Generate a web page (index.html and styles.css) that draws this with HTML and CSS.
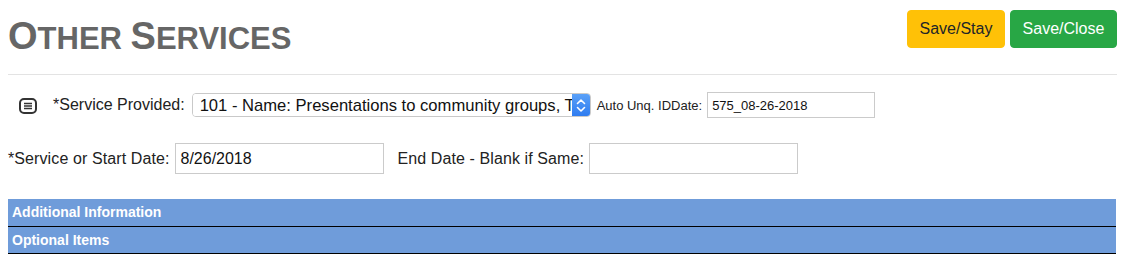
FILE: index.html
```html
<!DOCTYPE html>
<html>
<head>
    <title>Other Services</title>
    <link rel="stylesheet" href="styles.css">
</head>
<body>
    <div class="page">
        <div class="header">
            <h1 class="title"><span class="cap">O</span>THER <span class="cap">S</span>ERVICES</h1>
            <div class="actions">
                <button class="btn btn-stay">Save/Stay</button>
                <button class="btn btn-close">Save/Close</button>
            </div>
        </div>

        <div class="row row-service">
            <svg class="notes-icon" width="18" height="16" viewBox="0 0 18 16">
                <rect x="1" y="1" width="16" height="14" rx="4" fill="none" stroke="#333" stroke-width="2"/>
                <path d="M5 5.5h8M5 8h8M5 10.5h8" stroke="#333" stroke-width="1.5"/>
            </svg>
            <label class="label">*Service Provided:</label>
            <div class="select-box">
                <select class="select">
                    <option>101 - Name: Presentations to community groups, Training, Outreach</option>
                </select>
                <span class="select-arrows">
                    <svg width="18" height="23" viewBox="0 0 18 23">
                        <path d="M5.5 9.5L9 6l3.5 3.5M5.5 13.5L9 17l3.5-3.5" fill="none" stroke="#fff" stroke-width="1.6" stroke-linecap="round" stroke-linejoin="round"/>
                    </svg>
                </span>
            </div>
            <label class="label small">Auto Unq. IDDate:</label>
            <input class="field field-id" type="text" value="575_08-26-2018">
        </div>

        <div class="row row-dates">
            <label class="label">*Service or Start Date:</label>
            <input class="field field-date" type="text" value="8/26/2018">
            <label class="label label-end">End Date - Blank if Same:</label>
            <input class="field field-date" type="text" value="">
        </div>

        <div class="section">Additional Information</div>
        <div class="section">Optional Items</div>
    </div>
</body>
</html>
```

FILE: styles.css
```css
body { margin: 0; font-family: "Liberation Sans", Arial, sans-serif; color: #222; background: #fff; }
.page { margin: 0 11px 0 8px; }
.header { display: flex; justify-content: space-between; align-items: flex-start; border-bottom: 1px solid #e3e3e3; height: 74px; }
.title { margin: 17px 0 0; font-size: 31px; line-height: 39px; font-weight: bold; color: #666; }
.title .cap { font-size: 38px; }
.actions { display: flex; gap: 5px; margin-top: 10px; }
.btn { height: 38px; padding: 0; border: 1px solid transparent; border-radius: 4px; font-family: "Liberation Sans", Arial, sans-serif; font-size: 16px; }
.btn-stay { width: 98px; background: #ffc107; border-color: #ffc107; color: #212529; }
.btn-close { width: 107px; background: #28a745; border-color: #28a745; color: #fff; }
.row { display: flex; align-items: center; }
.row-service { margin-top: 17px; padding-left: 11px; height: 26px; }
.row-dates { margin-top: 25px; height: 31px; }
.row-dates .label { letter-spacing: 0.1px; margin-right: 6px; }
.row-dates .label-end { margin-left: 13px; margin-right: 5px; }
.notes-icon { margin-right: 16px; margin-top: 1px; }
.label { font-size: 16px; color: #222; margin-right: 7px; }
.label.small { font-size: 13px; margin: 0 5px 0 6px; }
.select-box { display: flex; width: 397px; height: 22px; border: 1px solid #c9c9c9; border-radius: 4px; overflow: hidden; background: #fff; }
.select { flex: 1; min-width: 0; border: 0; outline: 0; appearance: none; -webkit-appearance: none; background: #fff; font-family: "Liberation Sans", Arial, sans-serif; font-size: 16.6px; color: #111; padding: 0 0 0 7px; height: 22px; }
.select-arrows { width: 18px; height: 22px; background: linear-gradient(#5aa1f8, #2f7cf0); display: flex; align-items: center; justify-content: center; }
.field { border: 1px solid #cbcbcb; border-radius: 0; padding: 0 4px; font-family: "Liberation Sans", Arial, sans-serif; color: #111; box-sizing: border-box; outline: 0; }
.field-id { width: 168px; height: 26px; font-size: 13px; }
.field-date { width: 209px; height: 31px; font-size: 16px; }
.section { background: #6f9cda; color: #fff; font-weight: bold; font-size: 14px; line-height: 26px; padding-left: 4px; border-bottom: 1px solid #000; margin-right: 1px; }
.row-dates + .section { margin-top: 25px; height: 27px; }
```
